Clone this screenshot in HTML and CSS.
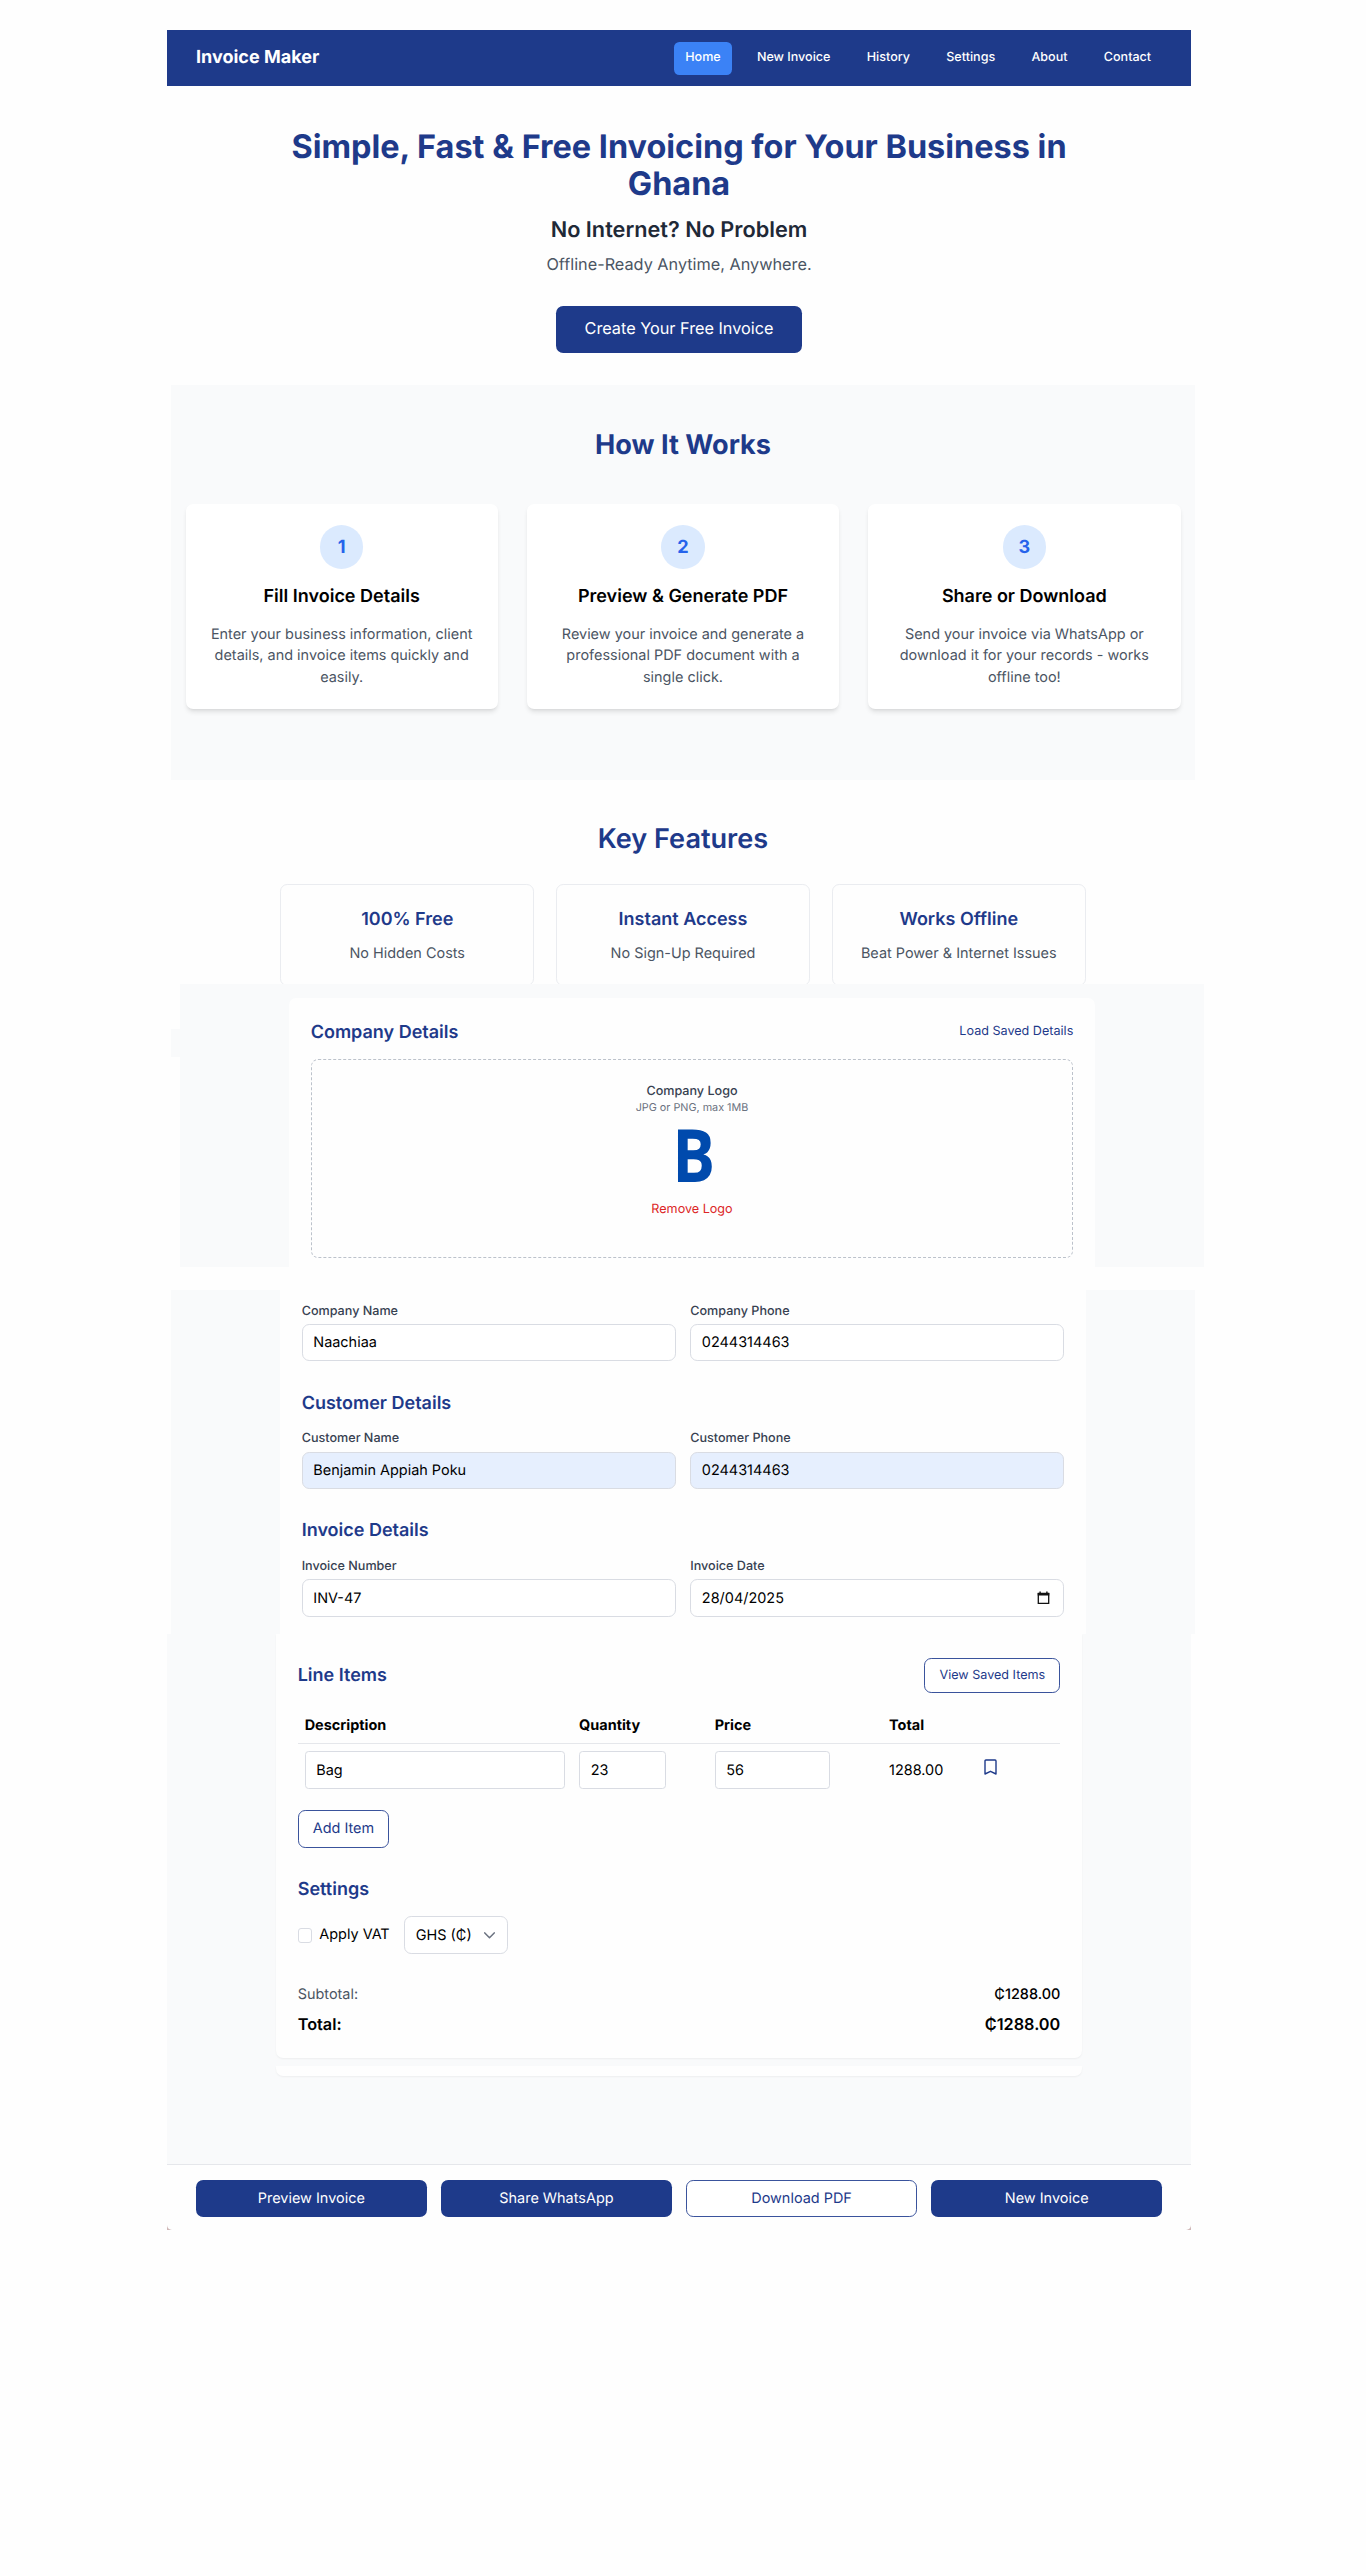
FILE: index.html
```html
<!DOCTYPE html>
<html lang="en">
<head>
<meta charset="utf-8">
<title>Invoice Maker</title>
<link rel="stylesheet" href="styles.css">
</head>
<body>
<div class="page">
  <header class="navbar">
    <div class="brand">Invoice Maker</div>
    <nav class="nav">
      <a class="nav-link active">Home</a>
      <a class="nav-link">New Invoice</a>
      <a class="nav-link">History</a>
      <a class="nav-link">Settings</a>
      <a class="nav-link">About</a>
      <a class="nav-link">Contact</a>
    </nav>
  </header>

  <section class="hero">
    <h1>Simple, Fast &amp; Free Invoicing for Your Business in<br>Ghana</h1>
    <h2>No Internet? No Problem</h2>
    <p>Offline-Ready Anytime, Anywhere.</p>
    <button class="btn btn-hero">Create Your Free Invoice</button>
  </section>

  <section class="how shifted">
    <h2 class="section-title bold">How It Works</h2>
    <div class="steps">
      <article class="step">
        <div class="step-number">1</div>
        <h3>Fill Invoice Details</h3>
        <p>Enter your business information, client<br>details, and invoice items quickly and<br>easily.</p>
      </article>
      <article class="step">
        <div class="step-number">2</div>
        <h3>Preview &amp; Generate PDF</h3>
        <p>Review your invoice and generate a<br>professional PDF document with a<br>single click.</p>
      </article>
      <article class="step">
        <div class="step-number">3</div>
        <h3>Share or Download</h3>
        <p>Send your invoice via WhatsApp or<br>download it for your records - works<br>offline too!</p>
      </article>
    </div>
  </section>

  <section class="features shifted">
    <h2 class="section-title">Key Features</h2>
    <div class="feature-list">
      <article class="feature"><h3>100% Free</h3><p>No Hidden Costs</p></article>
      <article class="feature"><h3>Instant Access</h3><p>No Sign-Up Required</p></article>
      <article class="feature"><h3>Works Offline</h3><p>Beat Power &amp; Internet Issues</p></article>
    </div>
  </section>

  <div class="company-row">
    <div class="edge-strip"></div>
    <section class="company">
      <div class="company-card">
        <div class="card-head">
          <h3 class="form-title">Company Details</h3>
          <a class="text-link">Load Saved Details</a>
        </div>
        <div class="logo-drop">
          <div class="logo-label">Company Logo</div>
          <div class="logo-hint">JPG or PNG, max 1MB</div>
          <div class="logo-mark">B</div>
          <a class="logo-remove">Remove Logo</a>
        </div>
      </div>
    </section>
  </div>

  <section class="details shifted">
    <div class="details-card">
      <div class="field-row">
        <label class="field">Company Name<input class="input" value="Naachiaa"></label>
        <label class="field">Company Phone<input class="input" value="0244314463"></label>
      </div>
      <h3 class="form-title">Customer Details</h3>
      <div class="field-row">
        <label class="field">Customer Name<input class="input filled" value="Benjamin Appiah Poku"></label>
        <label class="field">Customer Phone<input class="input filled" value="0244314463"></label>
      </div>
      <h3 class="form-title">Invoice Details</h3>
      <div class="field-row">
        <label class="field">Invoice Number<input class="input" value="INV-47"></label>
        <div class="field">Invoice Date
          <div class="input date"><span>28/04/2025</span>
            <svg width="13" height="14" viewBox="0 0 13 14"><path d="M1.3 2.6h10.4v9.7H1.3z" fill="none" stroke="#111" stroke-width="1.3"/><path d="M.7 1.7h11.6v2.8H.7zM2.4.4h1.4v2H2.4zM9.2.4h1.4v2H9.2z" fill="#111"/></svg>
          </div>
        </div>
      </div>
    </div>
  </section>

  <section class="items">
    <div class="items-card">
      <div class="card-head items-head">
        <h3 class="form-title">Line Items</h3>
        <button class="btn-outline small">View Saved Items</button>
      </div>
      <div class="item-grid item-header">
        <span>Description</span><span>Quantity</span><span>Price</span><span>Total</span><span></span>
      </div>
      <div class="item-grid item-row">
        <input class="input cell w-desc" value="Bag">
        <input class="input cell w-qty" value="23">
        <input class="input cell w-price" value="56">
        <span>1288.00</span>
        <svg class="bookmark" width="13" height="16" viewBox="0 0 13 16"><path d="M1 15V1.9Q1 1 1.9 1H11.1Q12 1 12 1.9V15L6.5 12.3Z" fill="none" stroke="#1e3a8a" stroke-width="1.4" stroke-linejoin="round"/></svg>
      </div>
      <button class="btn-outline add">Add Item</button>
      <h3 class="form-title settings-title">Settings</h3>
      <div class="settings-row">
        <span class="checkbox"></span>
        <span class="vat">Apply VAT</span>
        <div class="input select"><span>GHS (₵)</span>
          <svg width="11" height="7" viewBox="0 0 11 7"><path d="M.8.9 5.5 5.7 10.2.9" fill="none" stroke="#6b7280" stroke-width="1.5" stroke-linecap="round" stroke-linejoin="round"/></svg>
        </div>
      </div>
      <div class="sum-row subtotal"><span>Subtotal:</span><b>₵1288.00</b></div>
      <div class="sum-row total"><span>Total:</span><b>₵1288.00</b></div>
    </div>
    <div class="card-tail"></div>
  </section>

  <div class="footer-wrap">
    <footer class="actions">
      <button class="btn">Preview Invoice</button>
      <button class="btn">Share WhatsApp</button>
      <button class="btn-outline">Download PDF</button>
      <button class="btn">New Invoice</button>
    </footer>
  </div>
</div>
</body>
</html>
```
FILE: styles.css
```css
* { box-sizing: border-box; margin: 0; padding: 0; }
body {
  background: #fefefe;
  font-family: Inter, "Liberation Sans", sans-serif;
  font-size: 14.44px;
  line-height: 21.7px;
  color: #000;
  min-height: 2570px;
  text-rendering: geometricPrecision;
}
button, input { font: inherit; text-rendering: inherit; }
svg { display: block; flex: none; }

.page { width: 1024px; margin-left: 167px; padding-top: 30.45px; }
.shifted { margin-left: 4px; width: 1024px; }

/* Top bar */
.navbar {
  height: 55.7px;
  padding: 0 29px;
  display: flex;
  align-items: center;
  justify-content: space-between;
  background: #1e3a8a;
}
.brand { color: #fff; font-size: 18px; font-weight: 700; line-height: 25.9px; }
.nav { display: flex; gap: 14.5px; }
.nav-link {
  padding: 7.4px 10.9px 7px;
  border-radius: 5.4px;
  color: #fff;
  font-size: 12.55px;
  font-weight: 500;
  line-height: 18.1px;
}
.nav-link.active { background: #3b82f6; }

/* Hero */
.hero { height: 299.3px; padding-top: 43.3px; text-align: center; }
.hero h1 { font-size: 32.45px; line-height: 36.2px; font-weight: 700; color: #1e3a8a; }
.hero h2 { margin-top: 14.2px; font-size: 21.7px; line-height: 29px; font-weight: 600; color: #1f2937; }
.hero p { margin-top: 7.2px; font-size: 16.25px; line-height: 25.3px; color: #4b5563; }
.btn {
  background: #1e3a8a;
  color: #fff;
  border: 0;
  border-radius: 7.2px;
}
.btn-hero { margin-top: 28px; width: 245.5px; height: 47px; font-size: 16.25px; }

/* How it works */
.how { height: 394.3px; padding: 43.4px 14.5px 0; background: #f9fafb; }
.section-title { font-size: 27.1px; line-height: 32.6px; font-weight: 600; color: #1e3a8a; text-align: center; }
.section-title.bold { font-weight: 700; }
.steps { display: grid; grid-template-columns: repeat(3, 1fr); gap: 29px; margin-top: 42.5px; }
.step {
  height: 205.5px;
  padding-top: 21.5px;
  display: flex;
  flex-direction: column;
  align-items: center;
  text-align: center;
  background: #fff;
  border-radius: 7.2px;
  box-shadow: 0 3.6px 5.4px -1px rgba(0, 0, 0, .1), 0 1.8px 3.6px -2px rgba(0, 0, 0, .1);
}
.step-number {
  width: 43.5px;
  height: 43.5px;
  border-radius: 50%;
  background: #dbeafe;
  color: #2563eb;
  font-size: 18.1px;
  font-weight: 700;
  line-height: 44px;
}
.step h3 { margin-top: 14.9px; font-size: 18px; line-height: 25.3px; font-weight: 600; }
.step p { margin-top: 14.5px; color: #4b5563; }

/* Key features */
.features { height: 204.4px; padding: 43.4px 109.3px 0; overflow: hidden; }
.feature-list { display: grid; grid-template-columns: repeat(3, 1fr); gap: 21.9px; margin-top: 28px; }
.feature {
  height: 102px;
  padding-top: 21.9px;
  border: 1px solid #eaecf0;
  border-radius: 7.2px;
  text-align: center;
}
.feature h3 { font-size: 18px; line-height: 25.3px; font-weight: 600; color: #1e3a8a; }
.feature p { margin-top: 10.9px; color: #4b5563; }

/* Company details */
.company-row { display: flex; width: 1037px; margin-left: 4px; }
.edge-strip { width: 9px; height: 28px; margin-top: 45.3px; background: #f9fafb; }
.company { width: 1024px; height: 283px; padding: 13.4px 109px 0; background: #f9fafb; }
.company-card {
  height: 269.6px;
  padding: 22.2px 21.7px 0;
  background: #fefefe;
  border-radius: 7.2px 7.2px 0 0;
}
.card-head { display: flex; align-items: center; justify-content: space-between; }
.form-title { font-size: 18px; line-height: 25.3px; font-weight: 600; color: #1e3a8a; }
.text-link { font-size: 12.6px; line-height: 18.5px; color: #1e3a8a; }
.logo-drop {
  height: 199px;
  margin-top: 13.6px;
  padding-top: 23px;
  border: 1px dashed #bcc2cb;
  border-radius: 7.2px;
  display: flex;
  flex-direction: column;
  align-items: center;
}
.logo-label { font-size: 12.6px; line-height: 18.1px; font-weight: 500; color: #374151; }
.logo-hint { font-size: 10.8px; line-height: 14.5px; color: #6b7280; }
.logo-mark {
  height: 69.6px;
  margin: 4.8px 0 2.4px 3px;
  font-family: "Open Sans", "Noto Sans", sans-serif;
  font-size: 73.4px;
  font-weight: 700;
  line-height: 69.6px;
  color: #004aad;
  transform: scaleX(.87);
}
.logo-remove { margin-top: 9.4px; font-size: 12.6px; line-height: 18.1px; color: #dc2626; }

/* Customer and invoice details */
.details { height: 344px; margin-top: 23.3px; padding: 0 109px; background: #f9fafb; }
.details-card { height: 344px; padding: 12.3px 21.7px 0; background: #fefefe; }
.field-row { display: grid; grid-template-columns: 1fr 1fr; gap: 14.5px; }
.field { font-size: 12.6px; line-height: 18.1px; font-weight: 500; color: #374151; }
.input {
  display: block;
  width: 100%;
  height: 37.6px;
  margin-top: 3px;
  padding: .6px 10.6px 0;
  border: 1px solid #d9dce3;
  border-radius: 7.2px;
  background: #fff;
  color: #000;
  font-size: 14.44px;
  font-weight: 400;
  line-height: 21.7px;
}
.input.filled { background: #e6effe; }
.input.date, .input.select { display: flex; align-items: center; justify-content: space-between; }
.input.date { padding-right: 13px; }
.details .form-title { margin: 29.3px 0 14.5px; }

/* Line items and totals */
.items { height: 530px; padding: 0 109px; background: #f9fafb; }
.items-card {
  height: 424px;
  padding: 24px 21.7px 0;
  background: #fefefe;
  border-radius: 0 0 7.2px 7.2px;
  box-shadow: 0 1px 2px rgba(0, 0, 0, .05);
}
.btn-outline {
  padding-top: .4px;
  background: #fff;
  border: 1px solid #3a539c;
  border-radius: 7.2px;
  color: #1e3a8a;
}
.btn-outline.small { width: 136px; height: 34.5px; font-size: 12.6px; }
.item-grid { display: grid; grid-template-columns: 274.4px 135.6px 174.4px 95px 1fr; padding-left: 7px; }
.item-header { height: 36.3px; margin-top: 15px; padding-top: 6.6px; border-bottom: 1px solid #e5e7eb; font-weight: 700; }
.item-row { height: 52px; padding-top: 7px; align-items: start; }
.item-row span { margin-top: 8.4px; }
.input.cell { margin: 0; border-radius: 3.6px; }
.w-desc { width: 260.5px; }
.w-qty { width: 87px; }
.w-price { width: 115.5px; }
.bookmark { margin-top: 8px; }
.btn-outline.add { display: block; width: 91.5px; height: 37.8px; margin-top: 14px; }
.settings-title { margin-top: 29.2px; }
.settings-row { display: flex; align-items: center; margin-top: 14px; }
.checkbox { width: 14.5px; height: 14.5px; border: 1px solid #d9dce3; border-radius: 3px; background: #fff; }
.vat { width: 84.9px; margin-left: 7.1px; line-height: 22.4px; }
.input.select { width: 104px; margin: 0; padding-right: 12.5px; }
.sum-row { display: flex; justify-content: space-between; }
.subtotal { margin-top: 29.7px; }
.subtotal span { color: #4b5563; }
.subtotal b { font-weight: 500; }
.total { margin-top: 6.1px; font-size: 16.25px; line-height: 25.3px; font-weight: 600; }
.total b { font-weight: 600; }
.card-tail {
  height: 10px;
  margin-top: 8px;
  background: #fefefe;
  border-radius: 0 0 7.2px 7.2px;
  box-shadow: 0 1px 2px rgba(0, 0, 0, .05);
}

/* Bottom actions */
.footer-wrap { height: 66px; background: linear-gradient(#fefefe 50%, #cfb8b8 50%); }
.actions {
  height: 66px;
  padding: 14.3px 29px 0;
  display: grid;
  grid-template-columns: repeat(4, 1fr);
  gap: 14.5px;
  background: #fefefe;
  border-top: 1px solid #e5e7eb;
  border-radius: 0 0 5px 5px;
}
.actions button { height: 37.6px; padding-top: .5px; }
```
